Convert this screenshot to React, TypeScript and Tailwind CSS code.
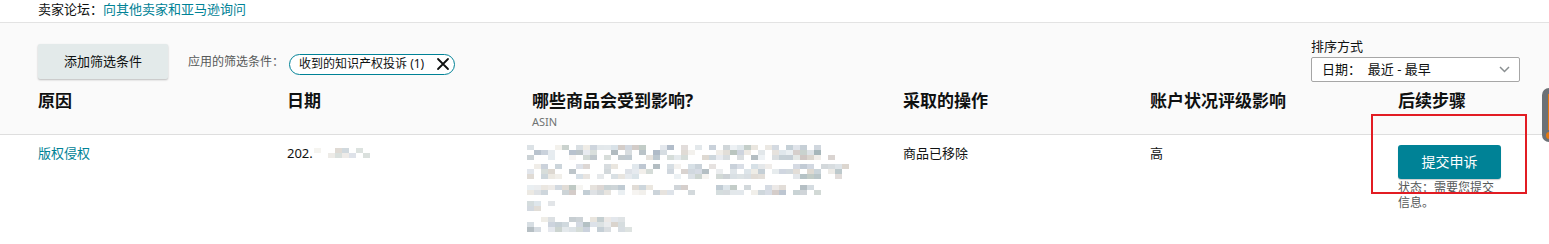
import React from 'react';

// 模糊的 ASIN 区块（马赛克）
const palette = [
  '#b8c4cc', '#c9cfd3', '#a9b4ba', '#d8d2ca', '#c4ccd8', '#b3bfb9',
  '#e8e4dc', '#d3dde4', '#aab6c4', '#cbc2be', '#bcc8d0', '#9fb0b4',
];

function rand(seed: number) {
  let s = seed;
  return () => {
    s = (s * 9301 + 49297) % 233280;
    return s / 233280;
  };
}

const Mosaic: React.FC<{ width: number; rows: number; seed: number }> = ({ width, rows, seed }) => {
  const r = rand(seed);
  const cols = Math.floor(width / 7);
  return (
    <div className="flex flex-col">
      {Array.from({ length: rows }).map((_, i) => (
        <div key={i} className="flex">
          {Array.from({ length: cols }).map((__, j) => {
            const v = r();
            const c = palette[Math.floor(r() * palette.length)];
            return (
              <div
                key={j}
                className="h-[5px] w-[7px]"
                style={{ backgroundColor: v > 0.35 ? c : '#ffffff', opacity: 0.35 + r() * 0.6 }}
              />
            );
          })}
        </div>
      ))}
    </div>
  );
};

const cols = 'grid grid-cols-[249px_245px_371px_247px_248px_1fr] items-start';

export default function App() {
  return (
    <div className="relative w-[1549px] h-[244px] overflow-hidden bg-white font-['Noto_Sans','Noto_Sans_CJK_SC',sans-serif] text-[#0f1111]">
      {/* 顶部 */}
      <div className="h-[23px] border-b border-[#e3e3e3] px-[38px] text-[13px] leading-[18px]">
        卖家论坛：<span className="text-[#008296]">向其他卖家和亚马逊询问</span>
      </div>

      {/* 筛选区 + 表头 */}
      <div className="h-[112px] border-b border-[#dedede] bg-[#fafafa] pl-[38px] pr-[29px] pt-[14px]">
        <div className="flex items-start justify-between">
          <div className="mt-[7px] flex items-center">
            <button className="h-[35px] w-[130px] rounded-[2px] bg-[#e3eaea] text-[13px] text-[#0f1111] shadow-[0_1px_2px_rgba(0,0,0,0.25)]">
              添加筛选条件
            </button>
            <span className="ml-[20px] text-[12px] leading-[16px] text-[#565959]">应用的筛选条件：</span>
            <span className="ml-[5px] mt-[5px] flex h-[21px] items-center rounded-full border border-[#008296] bg-white pl-[9px] pr-[4px] text-[12px] leading-[16px]">
              收到的知识产权投诉 (1)
              <svg className="ml-[12px]" width="14" height="14" viewBox="0 0 14 14">
                <path d="M2 2 L12 12 M12 2 L2 12" stroke="#0f1111" strokeWidth="1.8" strokeLinecap="round" />
              </svg>
            </span>
          </div>
          <div className="flex w-[209px] flex-col">
            <span className="text-[13px] leading-[18px]">排序方式</span>
            <div className="mt-[2px] flex h-[25px] items-center justify-between rounded-[2px] border border-[#a6a6a6] bg-white pl-[10px] pr-[9px] text-[13px]">
              <span>日期：&nbsp;&nbsp;最近 - 最早</span>
              <svg width="11" height="7" viewBox="0 0 11 7">
                <path d="M1 1 L5.5 5.5 L10 1" stroke="#8a8f91" strokeWidth="1.5" fill="none" />
              </svg>
            </div>
          </div>
        </div>

        <div className={`${cols} mt-[7px]`}>
          <div className="text-[17px] font-bold leading-[24px]">原因</div>
          <div className="text-[17px] font-bold leading-[24px]">日期</div>
          <div>
            <div className="text-[17px] font-bold leading-[24px]">哪些商品会受到影响?</div>
            <div className="mt-[2px] text-[11px] leading-[14px] text-[#6f7373]">ASIN</div>
          </div>
          <div className="text-[17px] font-bold leading-[24px]">采取的操作</div>
          <div className="text-[17px] font-bold leading-[24px]">账户状况评级影响</div>
          <div className="text-[17px] font-bold leading-[24px]">后续步骤</div>
        </div>
      </div>

      {/* 数据行 */}
      <div className={`${cols} pl-[38px] pt-[10px] text-[13px] leading-[16px]`}>
        <div className="text-[#008296]">版权侵权</div>
        <div className="flex items-center">
          202.
          <div className="ml-[1px]">
            <Mosaic width={56} rows={2} seed={7} />
          </div>
        </div>
        <div className="-ml-[5px] flex flex-col">
          <Mosaic width={314} rows={3} seed={11} />
          <div className="mt-[4px]"><Mosaic width={326} rows={3} seed={23} /></div>
          <div className="mt-[6px]"><Mosaic width={300} rows={2} seed={31} /></div>
          <div className="mt-[6px]"><Mosaic width={36} rows={2} seed={41} /></div>
          <div className="mt-[6px]"><Mosaic width={110} rows={3} seed={53} /></div>
        </div>
        <div>商品已移除</div>
        <div>高</div>
        <div className="w-[103px]">
          <button className="h-[34px] w-[103px] rounded-[3px] bg-[#008296] text-[14px] text-white shadow-[0_1px_1px_rgba(0,0,0,0.2)]">
            提交申诉
          </button>
          <div className="mt-[1px] text-[12px] leading-[15px] text-[#565959]">状态：需要您提交信息。</div>
        </div>
      </div>

      {/* 红框标注 */}
      <div className="absolute left-[1371px] top-[114px] h-[80px] w-[156px] border-2 border-[#e21c23]" />

      {/* 右侧浮动滑块 */}
      <div className="absolute left-[1542px] top-[88px] flex h-[54px] w-[14px] flex-col items-center rounded-full bg-[#6b7176]">
        <div className="mt-[6px] h-[36px] w-[2px] bg-[#e47911]" />
        <div className="absolute bottom-[1px] h-[11px] w-[11px] rounded-full border-2 border-[#6b7176] bg-[#e47911]" />
      </div>
    </div>
  );
}
